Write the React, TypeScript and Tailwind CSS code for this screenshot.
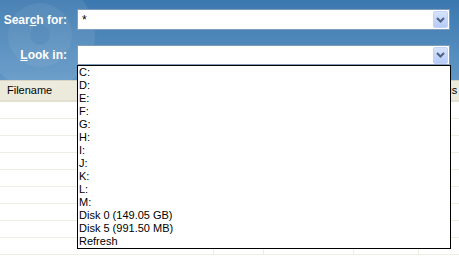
import React from "react";

const drives = ["C:", "D:", "E:", "F:", "G:", "H:", "I:", "J:", "K:", "L:", "M:", "Disk 0 (149.05 GB)", "Disk 5 (991.50 MB)", "Refresh"];

function Chevron() {
  return (
    <div className="w-[15px] h-[17px] mr-[1px] rounded-[2px] bg-gradient-to-b from-[#d6e3fd] to-[#b5cbf7] border border-[#c3d3f7] flex items-center justify-center">
      <svg width="9" height="6" viewBox="0 0 9 6">
        <path d="M1 1 L4.5 4.5 L8 1" stroke="#4d6185" strokeWidth="2" fill="none" />
      </svg>
    </div>
  );
}

function Combo({ value, h }: { value: string; h: string }) {
  return (
    <div className={`w-[373px] ${h} bg-white border border-[#7f9db9] flex items-center`}>
      <span className="flex-1 pl-[4px] text-[12px] text-black leading-none">{value}</span>
      <Chevron />
    </div>
  );
}

export default function App() {
  const rows = Array.from({ length: 9 });
  return (
    <div className="relative w-[459px] h-[263px] overflow-hidden bg-white text-[11px] text-black" style={{ fontFamily: '"Liberation Sans", Arial, sans-serif' }}>
      <div className="relative h-[80px] bg-gradient-to-b from-[#3b78af] to-[#6097c5] pt-[9px] flex flex-col gap-[15px]">
        <svg className="absolute left-[-30px] top-[-10px]" width="160" height="110" viewBox="0 0 160 110">
          <circle cx="70" cy="45" r="55" fill="#ffffff" opacity="0.08" />
          <circle cx="70" cy="45" r="32" fill="#ffffff" opacity="0.06" />
          <circle cx="70" cy="45" r="10" fill="#3b78af" opacity="0.2" />
        </svg>
        <div className="relative flex items-center">
          <div className="w-[67px] text-right text-white font-bold text-[12px]">Sear<span className="underline">c</span>h for:</div>
          <div className="ml-[10px]"><Combo value="*" h="h-[21px]" /></div>
        </div>
        <div className="relative flex items-center">
          <div className="w-[67px] text-right text-white font-bold text-[12px]"><span className="underline">L</span>ook in:</div>
          <div className="ml-[10px]"><Combo value="" h="h-[20px]" /></div>
        </div>
      </div>
      <div className="h-[22px] bg-[#ebeadb] border-t border-[#d6d2c2] border-b-2 border-b-[#e2dfcf] flex items-center">
        <div className="w-[214px] pl-[7px]">Filename</div>
        <div className="w-[50px]"></div>
        <div className="w-[90px]"></div>
        <div className="w-[65px]"></div>
        <div className="flex-1 pl-[7px] whitespace-nowrap">Status</div>
      </div>
      {rows.map((_, i) => (
        <div key={i} className="h-[17px] flex border-b border-[#efeee3]">
          <div className="w-[214px] border-r border-[#efeee3]"></div>
          <div className="w-[50px] border-r border-[#efeee3]"></div>
          <div className="w-[90px] border-r border-[#efeee3]"></div>
          <div className="w-[65px] border-r border-[#efeee3]"></div>
          <div className="flex-1"></div>
        </div>
      ))}
      <div className="absolute left-[77px] top-[65px] w-[374px] bg-white border border-black py-0 flex flex-col">
        {drives.map((d) => (
          <div key={d} className="h-[13px] leading-[13px] pl-[1px] text-[11px]">{d}</div>
        ))}
      </div>
    </div>
  );
}
